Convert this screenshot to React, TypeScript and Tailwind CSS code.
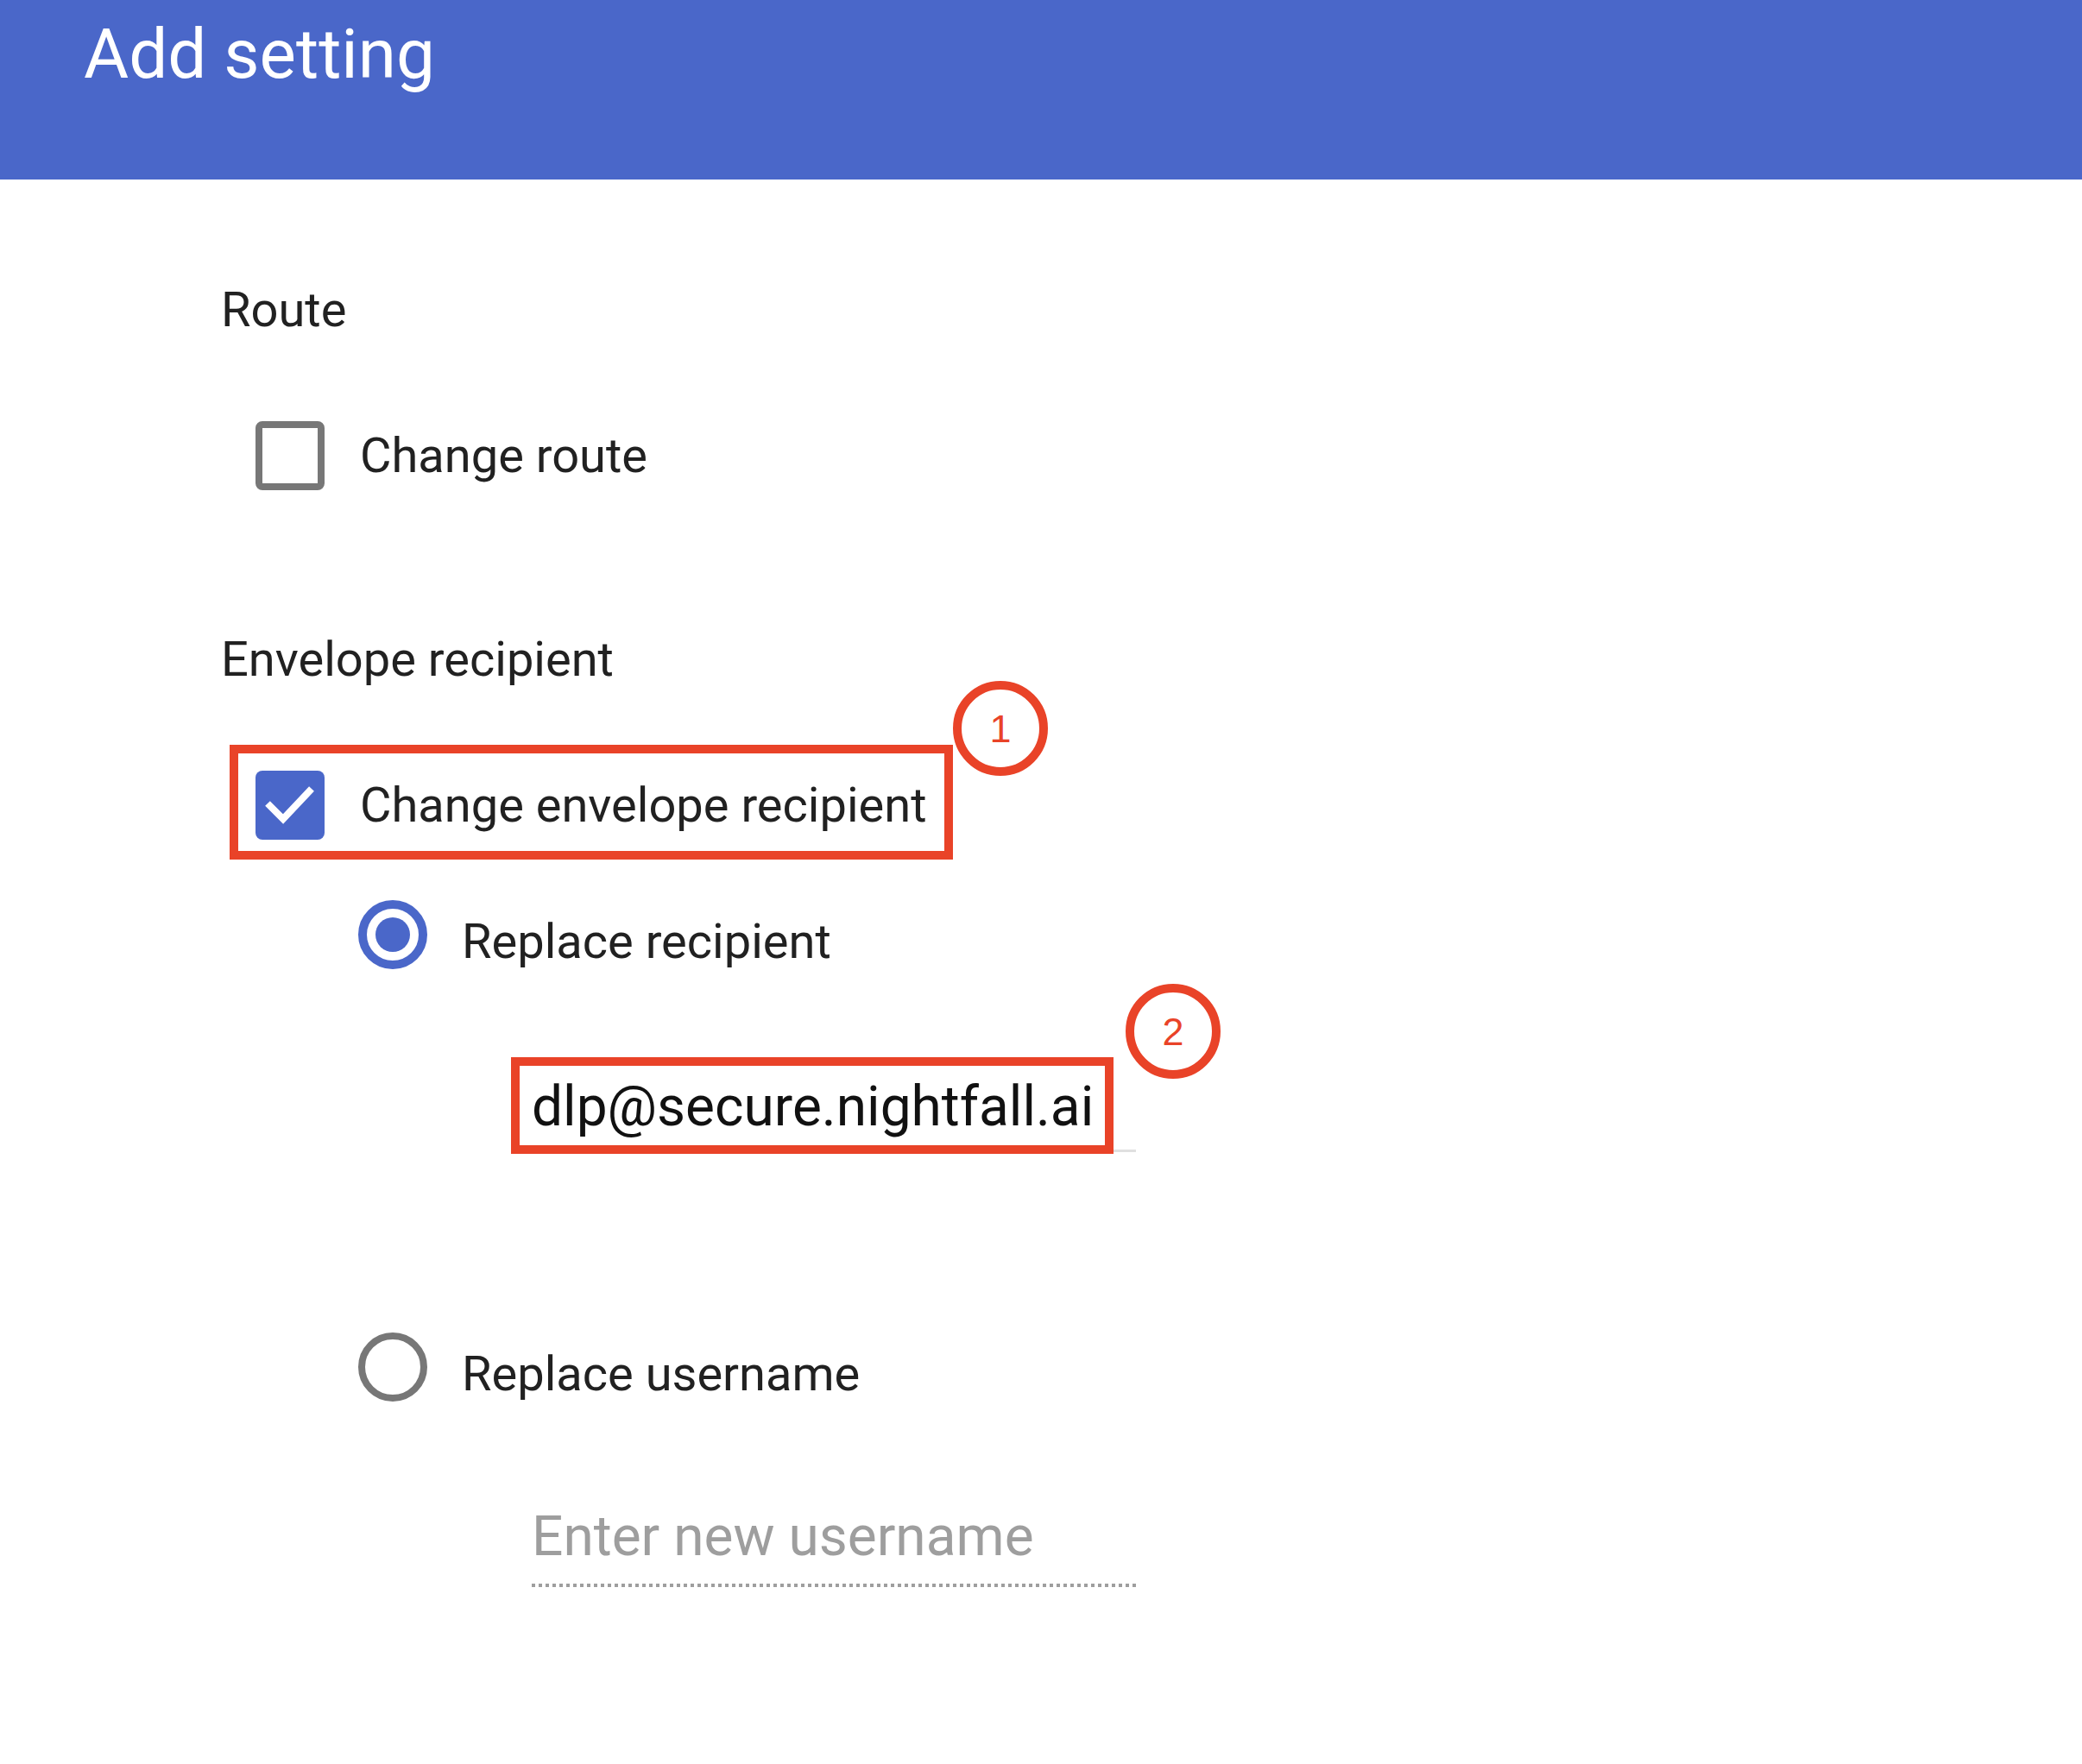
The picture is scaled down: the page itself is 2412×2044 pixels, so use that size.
import React from "react";

function Callout({ n, className }: { n: string; className: string }) {
  return (
    <div
      className={`absolute w-[110px] h-[110px] rounded-full border-[10px] border-[#e94328] flex items-center justify-center text-[45px] leading-none text-[#e94328] ${className}`}
      style={{ fontFamily: '"Liberation Sans", Arial, sans-serif' }}
    >
      {n}
    </div>
  );
}

export default function App() {
  return (
    <div
      className="w-full min-h-[2044px] bg-white text-[#212121]"
      style={{ fontFamily: 'Roboto, "Noto Sans", sans-serif' }}
    >
      <header className="h-[208px] bg-[#4a67c9] pl-[97px] pt-[23px]">
        <h1 className="text-[80px] leading-[80px] font-normal text-white">Add setting</h1>
      </header>

      <main className="pl-[256px] pb-[200px]">
        <div className="mt-[123px] text-[56px] leading-[56px]">Route</div>

        <div className="mt-[101px] ml-[40px] flex items-center h-[80px] gap-[41px]">
          <div className="w-[80px] h-[80px] rounded-[8px] border-[8px] border-[#777777] bg-white" />
          <span className="text-[56px] leading-[56px]">Change route</span>
        </div>

        <div className="mt-[168px] text-[56px] leading-[56px]">Envelope recipient</div>

        <div className="relative mt-[101px] ml-[40px] flex items-center h-[80px] gap-[41px]">
          <div className="w-[80px] h-[80px] rounded-[8px] bg-[#4a67c9] flex items-center justify-center">
            <svg width="80" height="80" viewBox="0 0 80 80">
              <polyline
                points="14,38 32,56 65,21"
                fill="none"
                stroke="white"
                strokeWidth="8"
                strokeLinecap="butt"
                strokeLinejoin="miter"
              />
            </svg>
          </div>
          <span className="text-[56px] leading-[56px]">Change envelope recipient</span>
          <div className="absolute left-[-30px] top-[-30px] w-[838px] h-[133px] border-[10px] border-[#e94328]" />
          <Callout n="1" className="left-[808px] top-[-104px]" />
        </div>

        <div className="mt-[70px] ml-[159px] flex items-start h-[80px] gap-[40px]">
          <div className="w-[80px] h-[80px] shrink-0 rounded-full border-[10px] border-[#4a67c9] flex items-center justify-center">
            <div className="w-[40px] h-[40px] rounded-full bg-[#4a67c9]" />
          </div>
          <span className="mt-[20px] text-[56px] leading-[56px]">Replace recipient</span>
        </div>

        <div className="relative mt-[128px] ml-[360px] w-[700px] pb-[17px] border-b-[3px] border-[#e0e0e0]">
          <div className="text-[64px] leading-[64px] text-[#111111]">dlp@secure.nightfall.ai</div>
          <div className="absolute left-[-24px] top-[-26px] w-[698px] h-[112px] border-[10px] border-[#e94328]" />
          <Callout n="2" className="left-[688px] top-[-111px]" />
        </div>

        <div className="mt-[209px] ml-[159px] flex items-start h-[80px] gap-[40px]">
          <div className="w-[80px] h-[80px] shrink-0 rounded-full border-[8px] border-[#777777]" />
          <span className="mt-[20px] text-[56px] leading-[56px]">Replace username</span>
        </div>

        <div className="mt-[125px] ml-[360px] w-[700px]">
          <div className="text-[64px] leading-[64px] text-[#9e9e9e] pb-[22px]">Enter new username</div>
          <div className="h-[4px] bg-[linear-gradient(to_right,#9e9e9e_50%,transparent_50%)] bg-[length:8px_4px] bg-repeat-x" />
        </div>
      </main>
    </div>
  );
}
